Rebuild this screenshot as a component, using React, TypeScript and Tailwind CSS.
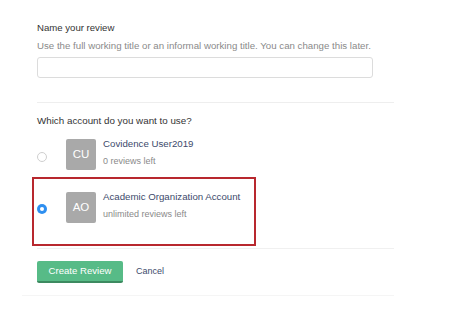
import React from "react";

function Avatar({ initials }: { initials: string }) {
  return (
    <div className="w-[30px] h-[31px] rounded-[2px] bg-[#a9a9a9] text-white flex items-center justify-center text-[11.5px] shrink-0">
      {initials}
    </div>
  );
}

function Radio({ checked }: { checked: boolean }) {
  return checked ? (
    <div className="w-[10px] h-[10px] rounded-full bg-[#2e8ff0] flex items-center justify-center shrink-0">
      <div className="w-[4px] h-[4px] rounded-full bg-white" />
    </div>
  ) : (
    <div className="w-[10px] h-[10px] rounded-full border border-[#cfcfcf] bg-white shrink-0" />
  );
}

export default function App() {
  return (
    <div
      className="w-[455px] h-[318px] bg-white relative overflow-hidden"
      style={{ fontFamily: '"Liberation Sans", Arial, sans-serif' }}
    >
      <div className="ml-[22px] w-[372px] flex flex-col">
        <div className="pl-[15px] pt-[22px] flex flex-col">
          <div className="text-[9.6px] leading-[12px] text-[#333]">Name your review</div>
          <div className="mt-[6px] text-[9.7px] leading-[12px] text-[#8a8a8a] whitespace-nowrap">
            Use the full working title or an informal working title. You can change this later.
          </div>
          <div className="mt-[5px] w-[336px] h-[21px] border border-[#dcdcdc] rounded-[3px] bg-white" />
          <div className="mt-[24px] h-px bg-[#eeeeee]" />
          <div className="mt-[12px] text-[9.8px] leading-[12px] text-[#333]">
            Which account do you want to use?
          </div>
          <div className="mt-[12px] flex items-center">
            <div className="w-[29px] pt-[4px]">
              <Radio checked={false} />
            </div>
            <Avatar initials="CU" />
            <div className="ml-[7px] flex flex-col self-start">
              <div className="text-[9.7px] leading-[12px] text-[#3d4a6b] mt-[-1px]">Covidence User2019</div>
              <div className="mt-[5px] text-[9px] leading-[12px] text-[#8a8a8a]">0 reviews left</div>
            </div>
          </div>
          <div className="mt-[7px] -ml-[5px] w-[224px] h-[69px] border-2 border-[#b8282e] flex items-start pt-[13px] pl-[3px]">
            <div className="w-[29px] pt-[12px]">
              <Radio checked={true} />
            </div>
            <Avatar initials="AO" />
            <div className="ml-[7px] flex flex-col">
              <div className="text-[9.7px] leading-[12px] text-[#3d4a6b] mt-[-1px]">Academic Organization Account</div>
              <div className="mt-[5px] text-[9px] leading-[12px] text-[#8a8a8a]">unlimited reviews left</div>
            </div>
          </div>
          <div className="mt-[2px] h-px bg-[#f0f0f0]" />
          <div className="mt-[12px] flex items-center">
            <div className="w-[86px] h-[22px] rounded-[2px] bg-[#57bb87] border-b-2 border-[#3d8a60] text-white text-[9.6px] flex items-center justify-center">
              Create Review
            </div>
            <div className="ml-[13px] text-[9px] text-[#3d4a6b]">Cancel</div>
          </div>
        </div>
        <div className="mt-[12px] h-px bg-[#f5f5f5]" />
      </div>
    </div>
  );
}
